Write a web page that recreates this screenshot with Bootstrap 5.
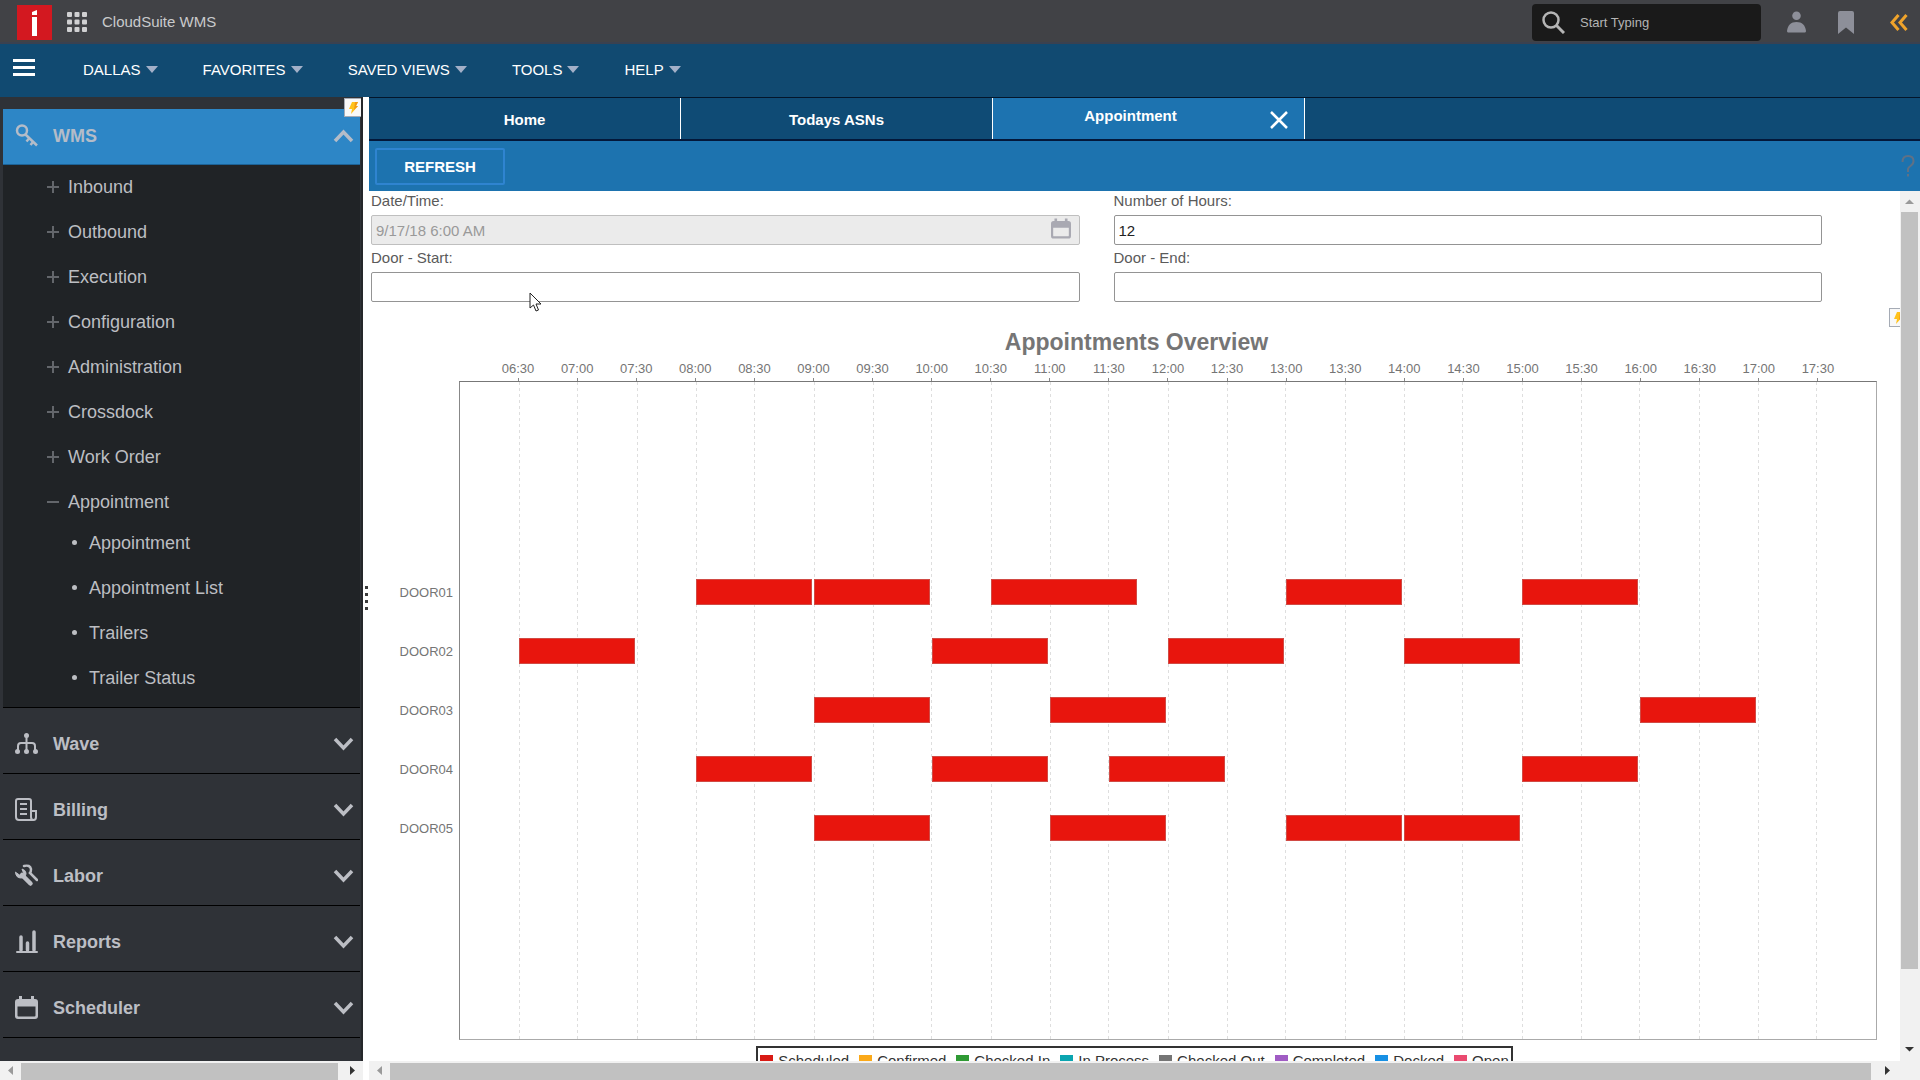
<!DOCTYPE html>
<html lang="en">
<head>
<meta charset="utf-8">
<meta name="viewport" content="width=device-width, initial-scale=1">
<title>CloudSuite WMS</title>
<link href="https://cdn.jsdelivr.net/npm/bootstrap@5.3.0/dist/css/bootstrap.min.css" rel="stylesheet">
<style>
body{font-family:"Liberation Sans",Arial,sans-serif;font-size:15px;line-height:20px;color:#5a5a5a;background:#fff}
button{font-family:inherit}
.topbar{height:44px;background:#414246;border-bottom:2px solid #3a4150;padding:2px 12px 0 17px;color:#c9cacc}
.apps{margin:0 15px}
.finder{width:229px;height:37px;background:#1a1a1a;border-radius:4px;padding-left:10px;margin-right:26px}
.finder input{background:transparent;border:0;outline:0;color:#c4c4c4;font-size:13px;width:160px;padding:2px 0 0;margin-left:15px}
.finder input::placeholder{color:#b4b4b4;opacity:1}
.iconbtn{background:none;border:0;padding:0;display:flex}
.menubar{height:53px;background:#114a71;padding:0 0 2px 13px}
.menus{margin-left:48px;gap:45px}
.menubtn{background:none;border:0;padding:0;color:#fff;font-size:15px;line-height:20px;display:flex;align-items:center}
.menubtn::after{border-top:7px solid #a3b0c8;border-right:6px solid transparent;border-left:6px solid transparent;margin-left:5px}
.side{width:363px;background:#2f3237;border-right:2px solid #25272b}
.sidenav{padding:12px 1px 0 3px}
.sidehead{width:100%;height:66px;border:0;border-bottom:1px solid #000;background:#2f3237;color:#bcbec4;font-size:18px;font-weight:700;line-height:24px;padding:6px 6px 0 12px;display:flex;align-items:center;text-align:left;gap:15px}
.sidehead.opened{height:56px;background:#2d86c6;border-bottom-color:#1c6296;padding-top:0;padding-bottom:2px;color:#b4bcc8}
.tree{background:#202326;padding-bottom:6px;border-bottom:1px solid #000;margin:0}
.tree a{height:45px;display:flex;align-items:center;color:#bcbec2;font-size:18px;line-height:24px;text-decoration:none;padding:0 0 2px 44px;gap:9px}
.subtree{margin-top:-4px}
.subtree a{padding-left:69px;gap:12px}
.dot{width:5px;height:5px;border-radius:50%;background:#bcbec2}
.bolt{position:absolute;top:1px;right:-2px;width:19px;height:19px}
.gutter{width:6px;gap:4px;background:#fff;padding-top:18px}
.gutter i{width:3px;height:3px;background:#3c3c3c}
.sbar{background:#f1f1f1;flex:none}
.sbar-x{height:19px;display:flex;align-items:stretch;padding-top:2px}
.sbar-x svg{width:21px;height:15px;flex:none}
.sbar-thumb{background:#c1c1c1}
.sbar-y{width:20px;display:flex;flex-direction:column;padding:0 2px 0 1px}
.sbar-y svg{width:17px;height:21px;flex:none}
.tabrow{height:44px;background:#0f4b75;border-top:1px solid #03162b;border-bottom:2px solid #03183a}
.tabitem{width:312px;border:0;border-right:1px solid #fff;background:transparent;color:#fff;font-weight:700;font-size:15px;line-height:20px;padding:2px 0 0}
.tabitem.current{background:#1d73b0}
.current .tabitem{width:auto;border:0;padding:0 16px 8px 14px}
.actions{height:50px;background:#1d73af;padding:0 5px 0 6px}
.refresh{width:130px;height:37px;border:2px solid #2f84d0;background:transparent;color:#fff;font-weight:700;font-size:15px;line-height:20px;padding:2px 0 0;border-radius:2px}
.fields{padding:0 78px 0 2px;column-gap:34px;row-gap:3px;display:grid;grid-template-columns:1fr 1fr}
.fields label{display:block;margin-bottom:4px}
.fields input{width:100%;height:30px;border:1px solid #949494;border-radius:2px;padding:0 4px;background:#fff;color:#222;display:block}
.fields input:disabled{background:#ebebeb;border-color:#bfbfbf;color:#999}
.calbtn{position:absolute;right:9px;top:3px;color:#a9a9b2}
.charttitle{font-size:23px;line-height:28px;font-weight:700;color:#757575;margin:26px 0 5px;text-align:center;padding-left:4px}
.chart{display:grid;grid-template-columns:90px 1fr;margin-right:23px}
.quarters{display:grid;grid-template-columns:repeat(48,minmax(0,1fr))}
.axis{grid-column:2;font-size:13px;line-height:16px;color:#757575}
.axis span{grid-column-end:span 2;text-align:center;padding-bottom:4px;background:linear-gradient(#888,#888) center bottom/1px 3px no-repeat}
.axis span:first-child{grid-column:2/span 2}
.doors{font-size:13px;line-height:59px;color:#757575;text-align:right;padding:182px 6px 0 0}
.plot{position:relative;border:1px solid #aaa;border-top-color:#777;border-left-color:#888;padding:180px 0 182px}
.lines{position:absolute;inset:0;width:100%;height:100%}
.lanes{position:relative}
.lane{height:59px;align-items:center}
.lane span{height:26px;background:#e8150d;border:1px solid #d14a44;margin-right:2px}
.legend{border:2px solid #333;color:#333;margin:6px auto 0;padding:3px 2px;gap:10px;width:max-content}
.legend span{display:flex;align-items:center;gap:5px}
.legend i{width:13px;height:13px}
.cursor{position:absolute;left:160px;top:101px}
.bolt2{position:absolute;right:-8px;top:117px;width:19px;height:19px}
</style>
<script src="https://cdn.jsdelivr.net/npm/bootstrap@5.3.0/dist/js/bootstrap.bundle.min.js"></script>
</head>
<body class="vh-100 d-flex flex-column overflow-hidden">
<svg class="d-none" xmlns="http://www.w3.org/2000/svg">
  <symbol id="down" viewBox="0 0 21 14"><path d="M2 2l8.500 9L19 2" fill="none" stroke="currentColor" stroke-width="3.500"/></symbol>
  <symbol id="plus" viewBox="0 0 12 12"><path d="M6 0v12M0 6h12" stroke="#63666b" stroke-width="2"/></symbol>
  <symbol id="cal" viewBox="0 0 23 23"><path d="M3 3h1V0h3v3h9V0h3v3h1a3 3 0 0 1 3 3v14a3 3 0 0 1-3 3H3a3 3 0 0 1-3-3V6a3 3 0 0 1 3-3zm-.500 7.500v9q0 1 1 1h16q1 0 1-1v-9z" fill="currentColor" fill-rule="evenodd"/></symbol>
  <symbol id="spark" viewBox="0 0 19 19"><rect x=".5" y=".5" width="18" height="18" fill="#f8f8f8" stroke="#a5abb5"/><path d="M8 4h6l-2 4h2l-7 8 1-5H5z" fill="#ffc21a"/><path d="M11 4h3l-2 4h2l-4 4z" fill="#f39a12"/></symbol>
  <symbol id="tri" viewBox="0 0 21 15"><path d="M13 3v9L8 7.500z" fill="#9a9a9a"/></symbol>
</svg>

<header class="topbar d-flex align-items-center flex-shrink-0">
  <svg width="35" height="35" viewBox="0 0 35 35" role="img" aria-label="Infor"><path fill="#d31820" d="M0 0h35v35H0z"/><path fill="#fff" d="M15 7l5-2v5h-5zM15 12h5v19h-5z"/></svg>
  <button class="iconbtn apps" aria-label="Applications"><svg width="20" height="20" viewBox="0 0 20 20" fill="#d0d0d2"><rect width="5" height="5" rx="1"/><rect x="7.500" width="5" height="5" rx="1"/><rect x="15" width="5" height="5" rx="1"/><rect y="7.500" width="5" height="5" rx="1"/><rect x="7.500" y="7.500" width="5" height="5" rx="1"/><rect x="15" y="7.500" width="5" height="5" rx="1"/><rect y="15" width="5" height="5" rx="1"/><rect x="7.500" y="15" width="5" height="5" rx="1"/><rect x="15" y="15" width="5" height="5" rx="1"/></svg></button>
  <span>CloudSuite WMS</span>
  <div class="finder d-flex align-items-center ms-auto">
    <svg width="23" height="23" viewBox="0 0 23 23" fill="none" stroke="#b5b5b5"><circle cx="9" cy="9" r="7.500" stroke-width="2.500"/><path d="M14.500 14.500L22 22" stroke-width="3"/></svg>
    <input type="text" placeholder="Start Typing" aria-label="Search">
  </div>
  <div class="d-flex align-items-center gap-4">
    <button class="iconbtn me-2" aria-label="User"><svg width="19" height="22" viewBox="0 0 20 22" fill="#8d8f99"><circle cx="10" cy="4.500" r="4.500"/><path d="M1 22q-1 0-1-1.500C1 14 4 11 10 11s9 3 10 9.500q0 1.500-1 1.500z"/></svg></button>
    <button class="iconbtn me-2 pe-1" aria-label="Bookmarks"><svg width="16" height="23" viewBox="0 0 16 23" fill="#8d8f99"><path d="M0 2q0-2 2-2h12q2 0 2 2v21l-8-6.500L0 23z"/></svg></button>
    <button class="iconbtn" aria-label="Collapse"><svg width="18" height="17" viewBox="0 0 18 17" fill="none" stroke="#efa32b" stroke-width="3"><path d="M8.500 1L2 8.500 8.500 16M16.500 1L10 8.500l6.500 7.500"/></svg></button>
  </div>
</header>

<nav class="menubar d-flex align-items-center flex-shrink-0">
  <button class="iconbtn" aria-label="Toggle menu"><svg width="22" height="24" viewBox="0 0 22 24"><path d="M0 2.500h22M0 9.500h22M0 16.500h22" stroke="#fff" stroke-width="3"/></svg></button>
  <div class="menus d-flex">
    <button class="menubtn dropdown-toggle">DALLAS</button>
    <button class="menubtn dropdown-toggle">FAVORITES</button>
    <button class="menubtn dropdown-toggle">SAVED VIEWS</button>
    <button class="menubtn dropdown-toggle">TOOLS</button>
    <button class="menubtn dropdown-toggle">HELP</button>
  </div>
</nav>

<div class="d-flex flex-grow-1 overflow-hidden">
  <aside class="d-flex flex-column flex-shrink-0">
    <div class="side position-relative flex-grow-1 overflow-hidden">
      <nav class="sidenav">
        <button class="sidehead opened"><svg width="23" height="23" viewBox="0 0 23 23" fill="none" stroke="currentColor" stroke-width="2.500"><circle cx="7" cy="6.500" r="5"/><path d="M10.500 10.500L22 21.500M14 14.500l-2.500 3M18 18l-2.500 3"/></svg><span class="flex-grow-1">WMS</span><svg width="21" height="14" viewBox="0 0 21 14"><path d="M2 12l8.500-9L19 12" fill="none" stroke="currentColor" stroke-width="3.500"/></svg></button>
        <ul class="tree list-unstyled">
          <li><a href="#"><svg width="12" height="12"><use href="#plus"/></svg>Inbound</a></li>
          <li><a href="#"><svg width="12" height="12"><use href="#plus"/></svg>Outbound</a></li>
          <li><a href="#"><svg width="12" height="12"><use href="#plus"/></svg>Execution</a></li>
          <li><a href="#"><svg width="12" height="12"><use href="#plus"/></svg>Configuration</a></li>
          <li><a href="#"><svg width="12" height="12"><use href="#plus"/></svg>Administration</a></li>
          <li><a href="#"><svg width="12" height="12"><use href="#plus"/></svg>Crossdock</a></li>
          <li><a href="#"><svg width="12" height="12"><use href="#plus"/></svg>Work Order</a></li>
          <li><a href="#"><svg width="12" height="12"><path d="M0 6h12" stroke="#63666b" stroke-width="2"/></svg>Appointment</a>
            <ul class="subtree list-unstyled">
              <li><a href="#"><span class="dot"></span>Appointment</a></li>
              <li><a href="#"><span class="dot"></span>Appointment List</a></li>
              <li><a href="#"><span class="dot"></span>Trailers</a></li>
              <li><a href="#"><span class="dot"></span>Trailer Status</a></li>
            </ul>
          </li>
        </ul>
        <button class="sidehead"><svg width="23" height="23" viewBox="0 0 23 23" fill="none" stroke="currentColor" stroke-width="2"><path d="M11.500 3v16M3 19v-5q0-3 3-3h11q3 0 3 3v5"/><g fill="currentColor" stroke="none"><circle cx="11.500" cy="3.500" r="2.500"/><circle cx="2.500" cy="19.500" r="2.500"/><circle cx="11.500" cy="19.500" r="2.500"/><circle cx="20.500" cy="19.500" r="2.500"/></g></svg><span class="flex-grow-1">Wave</span><svg width="21" height="14"><use href="#down"/></svg></button>
        <button class="sidehead"><svg width="23" height="23" viewBox="0 0 23 23" fill="none" stroke="currentColor" stroke-width="2"><path d="M18.500 22H4q-3 0-3-3V3q0-2 2-2h11q2 0 2 2v16q0 3 2.500 3t2.500-3v-6h-5M5 6h7M5 11h7M5 16h7"/></svg><span class="flex-grow-1">Billing</span><svg width="21" height="14"><use href="#down"/></svg></button>
        <button class="sidehead"><svg width="23" height="23" viewBox="0 0 23 23" fill="none" stroke="currentColor" stroke-linecap="round"><path d="M7 11l8.500 8.500" stroke-width="4.500"/><path d="M.5 8.500Q1 14 6 14T11 9Q10.500 6 7 5l1.500 4L5 11z" fill="currentColor" stroke-width="1"/><path d="M9 2q6-1.500 7 3 0 3-1 4l7 7" stroke-width="2.500"/></svg><span class="flex-grow-1">Labor</span><svg width="21" height="14"><use href="#down"/></svg></button>
        <button class="sidehead"><svg width="23" height="23" viewBox="0 0 23 23" fill="none" stroke="currentColor" stroke-width="3.500" stroke-linecap="round"><path d="M6 7v13M12.500 13v7M19 2v18"/><path d="M2 22h20" stroke-width="2"/></svg><span class="flex-grow-1">Reports</span><svg width="21" height="14"><use href="#down"/></svg></button>
        <button class="sidehead"><svg width="23" height="23"><use href="#cal"/></svg><span class="flex-grow-1">Scheduler</span><svg width="21" height="14"><use href="#down"/></svg></button>
      </nav>
      <svg class="bolt"><use href="#spark"/></svg>
    </div>
    <div class="sbar sbar-x"><svg><use href="#tri"/></svg><div class="sbar-thumb flex-grow-1"></div><svg class="ms-1" viewBox="0 0 21 15"><path d="M8 3v9l5-4.500z" fill="#333"/></svg></div>
  </aside>
  <div class="gutter d-flex flex-column align-items-center justify-content-center flex-shrink-0"><i></i><i></i><i></i><i></i></div>

  <main class="d-flex flex-column flex-grow-1 overflow-hidden">
    <div class="tabrow d-flex flex-shrink-0">
      <button class="tabitem">Home</button>
      <button class="tabitem">Todays ASNs</button>
      <div class="tabitem current d-flex align-items-center">
        <button class="tabitem flex-grow-1">Appointment</button>
        <button class="iconbtn me-3" aria-label="Close tab"><svg width="18" height="18" viewBox="0 0 18 18"><path d="M1 1l16 16M17 1L1 17" stroke="#fff" stroke-width="2.500"/></svg></button>
      </div>
    </div>
    <div class="actions d-flex align-items-center justify-content-between flex-shrink-0">
      <button class="refresh">REFRESH</button>
      <button class="iconbtn" aria-label="Help"><svg width="14" height="22" viewBox="0 0 14 22" fill="none" stroke="#5f7186" stroke-width="2"><path d="M1.500 7q0-6 5.500-6t5.500 5q0 3-3 5T7 15v2M7 19v2.500"/></svg></button>
    </div>
    <div class="d-flex flex-grow-1 overflow-hidden">
      <section class="flex-grow-1 overflow-hidden position-relative">
        <form class="fields">
          <div><label for="dt">Date/Time:</label><div class="position-relative"><input id="dt" type="text" value="9/17/18 6:00 AM" disabled><button type="button" class="iconbtn calbtn" aria-label="Pick date"><svg width="20" height="21" viewBox="0 0 20 21"><use href="#cal" width="20" height="21"/></svg></button></div></div>
          <div><label for="hrs">Number of Hours:</label><input id="hrs" type="text" value="12"></div>
          <div><label for="ds">Door - Start:</label><input id="ds" type="text"></div>
          <div><label for="de">Door - End:</label><input id="de" type="text"></div>
        </form>
        <h1 class="charttitle">Appointments Overview</h1>
        <div class="chart">
          <div class="axis quarters"><span>06:30</span><span>07:00</span><span>07:30</span><span>08:00</span><span>08:30</span><span>09:00</span><span>09:30</span><span>10:00</span><span>10:30</span><span>11:00</span><span>11:30</span><span>12:00</span><span>12:30</span><span>13:00</span><span>13:30</span><span>14:00</span><span>14:30</span><span>15:00</span><span>15:30</span><span>16:00</span><span>16:30</span><span>17:00</span><span>17:30</span></div>
          <div class="doors"><div>DOOR01</div><div>DOOR02</div><div>DOOR03</div><div>DOOR04</div><div>DOOR05</div></div>
          <div class="plot">
            <svg class="lines" stroke="#dedede" stroke-dasharray="3 3" shape-rendering="crispEdges"><line x1="4.167%" x2="4.167%" y2="100%"/><line x1="8.333%" x2="8.333%" y2="100%"/><line x1="12.5%" x2="12.5%" y2="100%"/><line x1="16.667%" x2="16.667%" y2="100%"/><line x1="20.833%" x2="20.833%" y2="100%"/><line x1="25%" x2="25%" y2="100%"/><line x1="29.167%" x2="29.167%" y2="100%"/><line x1="33.333%" x2="33.333%" y2="100%"/><line x1="37.5%" x2="37.5%" y2="100%"/><line x1="41.667%" x2="41.667%" y2="100%"/><line x1="45.833%" x2="45.833%" y2="100%"/><line x1="50%" x2="50%" y2="100%"/><line x1="54.167%" x2="54.167%" y2="100%"/><line x1="58.333%" x2="58.333%" y2="100%"/><line x1="62.5%" x2="62.5%" y2="100%"/><line x1="66.667%" x2="66.667%" y2="100%"/><line x1="70.833%" x2="70.833%" y2="100%"/><line x1="75%" x2="75%" y2="100%"/><line x1="79.167%" x2="79.167%" y2="100%"/><line x1="83.333%" x2="83.333%" y2="100%"/><line x1="87.5%" x2="87.5%" y2="100%"/><line x1="91.667%" x2="91.667%" y2="100%"/><line x1="95.833%" x2="95.833%" y2="100%"/></svg>
            <!-- one grid column per quarter hour, column 1 starts at 06:00 -->
            <div class="lanes">
              <div class="lane quarters"><span style="grid-column:9/13"></span><span style="grid-column:13/17"></span><span style="grid-column:19/24"></span><span style="grid-column:29/33"></span><span style="grid-column:37/41"></span></div>
              <div class="lane quarters"><span style="grid-column:3/7"></span><span style="grid-column:17/21"></span><span style="grid-column:25/29"></span><span style="grid-column:33/37"></span></div>
              <div class="lane quarters"><span style="grid-column:13/17"></span><span style="grid-column:21/25"></span><span style="grid-column:41/45"></span></div>
              <div class="lane quarters"><span style="grid-column:9/13"></span><span style="grid-column:17/21"></span><span style="grid-column:23/27"></span><span style="grid-column:37/41"></span></div>
              <div class="lane quarters"><span style="grid-column:13/17"></span><span style="grid-column:21/25"></span><span style="grid-column:29/33"></span><span style="grid-column:33/37"></span></div>
            </div>
          </div>
        </div>
        <div class="legend d-flex">
          <span><i style="background:#d81a14"></i>Scheduled</span><span><i style="background:#fba919"></i>Confirmed</span><span><i style="background:#2f9a34"></i>Checked In</span><span><i style="background:#0ba5b0"></i>In Process</span><span><i style="background:#757575"></i>Checked Out</span><span><i style="background:#a05cc4"></i>Completed</span><span><i style="background:#1790e4"></i>Docked</span><span><i style="background:#ea4a70"></i>Open</span>
        </div>
        <svg class="bolt2"><use href="#spark"/></svg>
        <svg class="cursor" width="13" height="20" viewBox="0 0 13 20"><path d="M1 1v15l3.500-3 2.500 6 2.500-1L7 12h5z" fill="#fff" stroke="#222"/></svg>
      </section>
      <div class="sbar sbar-y"><svg viewBox="0 0 17 21"><path d="M4 13h9L8.500 8.500z" fill="#9a9a9a"/></svg><div class="sbar-thumb" style="height:87%"></div><svg class="mt-auto" viewBox="0 0 17 21"><path d="M4 7h9l-4.500 4.500z" fill="#333"/></svg></div>
    </div>
    <div class="sbar sbar-x"><svg><use href="#tri"/></svg><div class="sbar-thumb flex-grow-1"></div><svg class="ms-1 me-4" viewBox="0 0 21 15"><path d="M10 3v9l5-4.500z" fill="#333"/></svg></div>
  </main>
</div>
</body>
</html>
